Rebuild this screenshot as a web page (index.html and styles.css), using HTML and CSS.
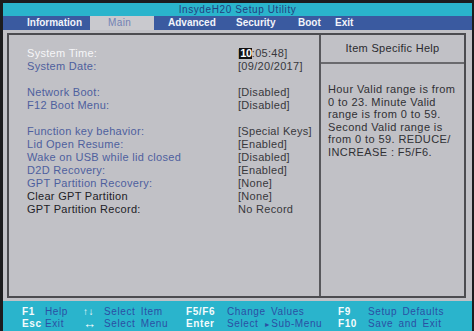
FILE: index.html
```html
<!DOCTYPE html>
<html lang="en">
<head>
  <meta charset="UTF-8">
  <meta name="viewport" content="width=device-width, initial-scale=1.0">
  <title>InsydeH20 Setup Utility</title>
  <link rel="stylesheet" href="styles.css">
</head>
<body>
  <div class="screen">
    <div class="title">InsydeH20 Setup Utility</div>

    <nav class="menu">
      <span class="tab">Information</span>
      <span class="tab"><span class="tab-active">Main</span></span>
      <span class="tab">Advanced</span>
      <span class="tab">Security</span>
      <span class="tab">Boot</span>
      <span class="tab">Exit</span>
    </nav>

    <main class="panel">
      <div class="box">
        <section class="items">
          <div class="item">
            <span class="label selected">System Time:</span>
            <span class="value">[<span class="field">10</span>:05:48]</span>
          </div>
          <div class="item">
            <span class="label">System Date:</span>
            <span class="value">[09/20/2017]</span>
          </div>
          <div class="spacer"></div>
          <div class="item">
            <span class="label">Network Boot:</span>
            <span class="value">[Disabled]</span>
          </div>
          <div class="item">
            <span class="label">F12 Boot Menu:</span>
            <span class="value">[Disabled]</span>
          </div>
          <div class="spacer"></div>
          <div class="item">
            <span class="label">Function key behavior:</span>
            <span class="value">[Special Keys]</span>
          </div>
          <div class="item">
            <span class="label">Lid Open Resume:</span>
            <span class="value">[Enabled]</span>
          </div>
          <div class="item">
            <span class="label">Wake on USB while lid closed</span>
            <span class="value">[Disabled]</span>
          </div>
          <div class="item">
            <span class="label">D2D Recovery:</span>
            <span class="value">[Enabled]</span>
          </div>
          <div class="item">
            <span class="label">GPT Partition Recovery:</span>
            <span class="value">[None]</span>
          </div>
          <div class="item">
            <span class="label plain">Clear GPT Partition</span>
            <span class="value">[None]</span>
          </div>
          <div class="item">
            <span class="label plain">GPT Partition Record:</span>
            <span class="value">No Record</span>
          </div>
        </section>

        <aside class="help">
          <div class="help-title">Item Specific Help</div>
          <p class="help-text">
            Hour Valid range is from<br>
            0 to 23. Minute Valid<br>
            range is from 0 to 59.<br>
            Second Valid range is<br>
            from 0 to 59. REDUCE/<br>
            INCREASE : F5/F6.
          </p>
        </aside>
      </div>
    </main>

    <footer class="keys">
      <span class="key">F1</span>
      <span class="desc">Help</span>
      <span class="key">&uarr;&darr;</span>
      <span class="desc">Select Item</span>
      <span class="key">F5/F6</span>
      <span class="desc">Change Values</span>
      <span class="key">F9</span>
      <span class="desc">Setup Defaults</span>

      <span class="key">Esc</span>
      <span class="desc">Exit</span>
      <span class="key wide">&harr;</span>
      <span class="desc">Select Menu</span>
      <span class="key">Enter</span>
      <span class="desc">Select <span class="arrow">&#9658;</span>Sub-Menu</span>
      <span class="key">F10</span>
      <span class="desc">Save and Exit</span>
    </footer>
  </div>
</body>
</html>
```

FILE: styles.css
```css
body {
  margin: 0;
  background-color: #1c1c1e;
  font-family: 'Liberation Sans', Arial, sans-serif;
}
.screen {
  display: flex;
  flex-direction: column;
  margin: 3px 2px 0 3px;
  height: 328px;
}
.title {
  height: 13px;
  line-height: 13px;
  background-color: #2ab4cc;
  color: #233f80;
  font-size: 10px;
  letter-spacing: 0.6px;
  text-align: center;
}
.menu {
  display: grid;
  grid-template-columns: 63px 78px 68px 62px 37px auto;
  height: 14px;
  line-height: 14px;
  padding-left: 24px;
  background-color: #3a5aa0;
  color: #f2f4fa;
  font-size: 10px;
  font-weight: bold;
}
.tab-active {
  display: block;
  width: 46px;
  padding-left: 18px;
  background-color: #c9c9ce;
  color: #7282b4;
  font-weight: normal;
  letter-spacing: 0.4px;
}
.panel {
  flex: 1;
  padding: 3px 6px 3px 4px;
  background-color: #c1c1c6;
}
.box {
  display: grid;
  grid-template-columns: 310px 1fr;
  height: 261px;
  border: 2px solid #4c4c50;
  font-size: 11px;
  letter-spacing: 0.3px;
}
.items {
  padding: 12px 0 0 18px;
}
.item {
  display: grid;
  grid-template-columns: 211px 1fr;
  height: 13px;
  line-height: 13px;
  white-space: nowrap;
}
.spacer {
  height: 13px;
}
.label {
  color: #4e5f9e;
}
.label.selected {
  color: #f6f6f8;
}
.label.plain {
  color: #222226;
}
.value {
  color: #38383c;
}
.field {
  display: inline-block;
  margin-left: -2px;
  padding: 0 0 0 1px;
  line-height: 11px;
  background-color: #121214;
  color: #ffffff;
  font-weight: bold;
  letter-spacing: -0.4px;
}
.help {
  border-left: 2px solid #58585c;
}
.help-title {
  height: 27px;
  line-height: 27px;
  border-bottom: 2px solid #6a6a6e;
  color: #2a2a2e;
  text-align: center;
}
.help-text {
  margin: 0;
  padding: 19px 0 0 7px;
  line-height: 12.5px;
  color: #303034;
  letter-spacing: 0.4px;
  white-space: nowrap;
}
.keys {
  display: grid;
  grid-template-columns: 23px 38px 21px 82px 41px 111px 30px auto;
  align-content: start;
  height: 30px;
  padding: 5px 0 0 19px;
  box-sizing: border-box;
  background-color: #2ab4cc;
  font-size: 10px;
  line-height: 12px;
  letter-spacing: 0.6px;
  white-space: nowrap;
}
.key {
  color: #f4fbfd;
  font-weight: bold;
}
.key.wide {
  font-size: 13px;
  line-height: 12px;
}
.desc {
  color: #2a4fa4;
  word-spacing: 2px;
}
.arrow {
  font-size: 7px;
  word-spacing: 0;
}
```
